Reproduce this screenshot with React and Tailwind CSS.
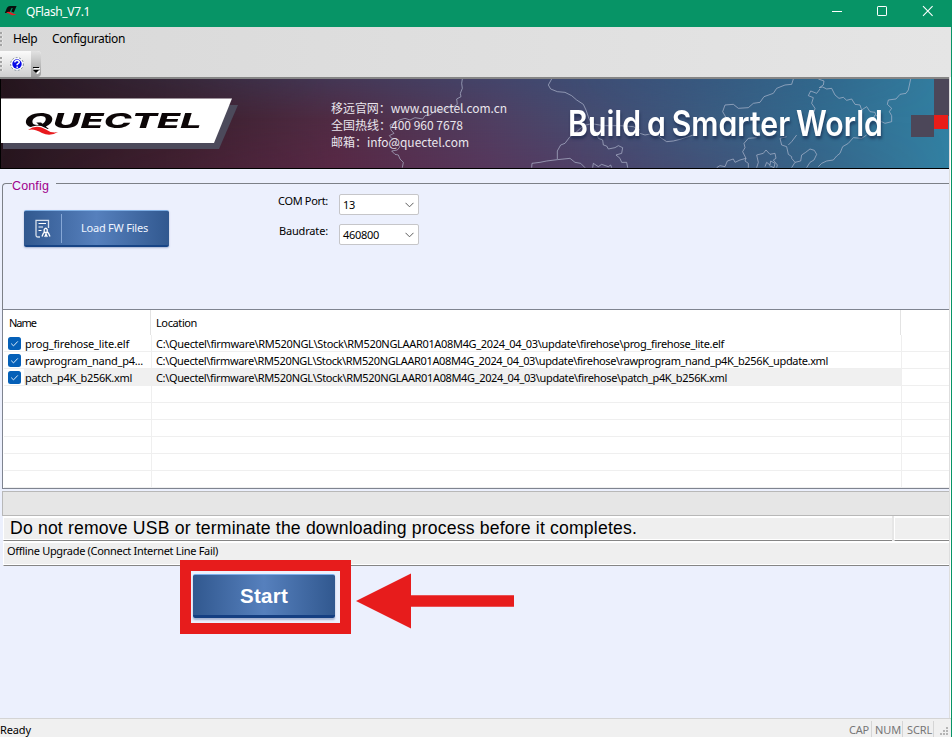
import { useLayoutEffect, useRef } from "react";

const UI = "font-['Noto_Sans',sans-serif]";

/* Single line of text spread over a fixed width, by tracking or by horizontal scaling. */
function Fit({ w, stretch = false, className = "", children }) {
  const ref = useRef(null);
  useLayoutEffect(() => {
    const el = ref.current;
    const apply = () => {
      el.style.letterSpacing = "0px";
      el.style.transform = "none";
      const natural = el.offsetWidth;
      if (stretch) el.style.transform = `scaleX(${w / natural})`;
      else el.style.letterSpacing = `${(w - el.getBoundingClientRect().width) / String(children).length}px`;
    };
    apply();
    document.fonts.ready.then(apply);
  }, [w, stretch, children]);
  return (
    <span ref={ref} className={`inline-block w-max origin-left whitespace-pre ${className}`}>
      {children}
    </span>
  );
}

function TitleBar() {
  return (
    <header className="flex h-[27px] items-start bg-[#079466] pl-[4px] text-white">
      <svg className="mt-[5px]" width="14" height="12" viewBox="0 0 14 12">
        <path d="M.8 8 L3 2.8 Q4 1 6 1 H12.6 L9.8 7.5 L7.3 6.5 L8.8 3 H7.6 L5.2 8 Z" fill="#07100d" />
        <path d="M2 7.6 Q5 6 7.5 7.8 Q9.5 9.4 12.5 9.2 Q9.5 11.4 6.5 9.4 Q4.5 8 2 7.6Z" fill="#ee1c24" />
      </svg>
      <div className={`ml-[8px] mt-[3px] text-[12px] leading-[18px] ${UI}`}>
        <Fit w={64}>QFlash_V7.1</Fit>
      </div>
      <svg className="ml-auto mr-[17px] mt-[5px]" width="104" height="12" viewBox="0 0 104 12" fill="none" stroke="#fff">
        <path d="M1 6.5h10" />
        <rect x="46.5" y="1.5" width="9" height="9" rx="0.6" />
        <path d="M92 1.2l9.6 9.6M101.6 1.2l-9.6 9.6" strokeWidth="1.1" />
      </svg>
    </header>
  );
}

function Grip({ className }) {
  return (
    <svg className={className} width="3" height="14" viewBox="0 0 3 14">
      {[0, 4, 8, 12].map((y) => (
        <g key={y}>
          <rect x="1" y={y + 0.5} width="1.5" height="1.5" fill="#fff" />
          <rect x="0" y={y} width="2" height="2" fill="#a4a4a4" />
        </g>
      ))}
    </svg>
  );
}

function Menus() {
  return (
    <div className={`flex h-[50px] flex-col bg-gradient-to-r from-[#d9d9d9] to-[#e5e5e5] text-[12px] text-black ${UI}`}>
      <div className="flex h-[24px] items-center">
        <Grip />
        <div className="ml-[10px] leading-[18px]">
          <Fit w={24}>Help</Fit>
        </div>
        <div className="ml-[15px] leading-[18px]">
          <Fit w={73}>Configuration</Fit>
        </div>
      </div>
      <div className="flex h-[26px] w-[41px] items-center rounded-r-[4px] bg-gradient-to-b from-[#fbfbfb] to-[#cfcfcf]">
        <Grip />
        <svg className="-mt-px ml-[7px]" width="14" height="14" viewBox="0 0 14 14">
          <circle cx="7" cy="7" r="6.4" fill="#fff" stroke="#7f8b99" strokeWidth="1" strokeDasharray="2 1.5" />
          <circle cx="7" cy="7" r="4.7" fill="#0808e8" />
          <path d="M4.7 5.4Q5 3.4 7.1 3.4T9.3 5.3Q9.3 6.2 7.2 7.4V8.3M7.2 9.4V11" fill="none" stroke="#fff" strokeWidth="1.5" />
        </svg>
        <div className="ml-auto flex h-full w-[10px] items-end justify-center rounded-r-[4px] bg-gradient-to-b from-[#e2e2e2] to-[#9b9b9b] pb-[3px]">
          <svg width="8" height="7" viewBox="0 0 8 7">
            <path d="M2 1.5h6M3 4h5L5.5 7z" fill="#fff" stroke="#fff" />
            <path d="M1 .5h6" stroke="#000" />
            <path d="M1 3h6L4 6z" fill="#000" />
          </svg>
        </div>
      </div>
    </div>
  );
}

/* Country borders, drawn on a grid three times as fine as the page. */
const WEST = [
  "427,12 425,25 427,40 421,55 423,65 410,72 412,88 402,95 385,98 370,108 345,108 330,120 315,122 308,132 285,128 270,135 255,130 238,135 222,145 210,150 213,165 222,175 208,182 215,190 230,192 228,205 240,215 232,225 215,228 225,238 235,240 240,252 250,262 247,278",
  "695,12 685,30 692,42 712,50 735,52 755,62 770,75 790,88 798,105 805,125 815,150 830,175 835,190 848,195 850,210 860,213 865,222 885,218 895,212 908,218 905,235 888,240 900,250 905,262 920,262 923,278",
  "635,278 636,265 660,262 680,258 712,254 750,250 765,262 782,265 795,278",
  "712,252 712,228 722,210 735,205 750,185 765,175 790,152 815,146 850,152 900,152 940,155 960,165",
  "818,278 820,265 835,275 845,268 865,275 872,270 875,278",
];
const EAST = [
  "0,175 15,180 35,176 50,178 65,190 80,200 100,198 120,193 160,180",
  "230,278 240,272 255,275 262,258 280,252 285,262 300,255 318,250 308,230 315,218 312,205 325,190 350,188",
  "318,250 315,258 325,265 325,278",
  "350,278 355,262 350,240 370,235 378,225 390,238 405,235 408,250 400,255 412,270 410,278",
  "375,275 380,262 390,270 392,258 405,265 402,278 388,272",
  "455,278 465,262 455,250 455,245 445,238 440,215 425,210 420,190 440,185",
  "465,262 482,258 485,240 497,232 510,222 523,226 530,238 522,255 510,262 500,278",
  "535,275 545,265 560,258 580,255 590,243 600,235 608,215 625,205 640,188 665,190 680,180",
  "445,210 455,200 470,180",
  "265,140 248,110 255,90 280,88 295,100 325,98 340,85 360,82 372,65 400,55 410,40 435,30 455,28 460,12",
  "535,12 552,18 550,30 538,38 548,36 560,42 575,40 585,60 597,70 610,67 620,76 635,72 645,88 660,90 665,105 680,95 690,110 705,112 708,122 720,125",
  "540,42 530,55 512,48 505,62 520,68 515,85 525,100 522,112",
  "812,12 805,45 798,55 780,58 768,72 745,75 742,88 755,100 748,110 755,122 755,140 735,145 725,140 715,145 700,130 705,120",
];

function MapLines() {
  return (
    <svg className="absolute left-0 top-0" width="949" height="89" viewBox="0 79 949 89" fill="none" stroke="#b6bdd3" strokeOpacity=".66" strokeWidth="3" strokeLinejoin="round">
      <g transform="translate(320 75) scale(.33333)">
        {WEST.map((p) => <polyline key={p} points={p} />)}
      </g>
      <g transform="translate(640 75) scale(.33333)">
        {EAST.map((p) => <polyline key={p} points={p} />)}
      </g>
    </svg>
  );
}

function Banner() {
  return (
    <div className="h-[92px] border-b border-t-2 border-b-black border-t-[#858585]">
      <div className="relative flex h-[89px] overflow-hidden bg-[linear-gradient(97deg,#25151d_0%,#3b202e_20%,#512c45_36%,#4f3f62_52%,#3f5379_68%,#32698d_85%,#3281a3_100%)]">
        <div className="absolute inset-0 bg-[linear-gradient(180deg,rgba(40,85,130,.28)_0%,rgba(0,0,0,0)_45%,rgba(112,28,72,.22)_100%)] [mask-image:linear-gradient(90deg,transparent,black_35%,black_60%,transparent)]" />
        <MapLines />
        <svg className="absolute left-0 top-0" width="949" height="89" viewBox="0 79 949 89">
          <path d="M3 105H238L219 149H3z" fill="#4c4a5b" />
          <path d="M1 98.5H232L214 143H1z" fill="#fff" />
          <path d="M0 79h1v89H0z" fill="#000" />
          <path d="M934 79h15v37h-15zM911 115h23v22h-23z" fill="#4c4759" />
          <path d="M934 115h14v14h-14z" fill="#e91d18" />
        </svg>
        <div className="relative mt-[28px] w-[331px] pl-[24px]">
          <Fit w={178} stretch className="font-['Inter',sans-serif] text-[20.5px] font-extrabold italic leading-[28px] text-[#0c0607]">
            QUECTEL
          </Fit>
          <svg className="absolute left-[25px] top-[17px]" width="36" height="13" viewBox="0 0 36 13">
            <path d="M3 6Q11 0 20 5Q26 9.5 33 8Q25 13 17 9Q9 4 3 6Z" fill="#e8191d" stroke="#fff" strokeWidth="2.4" paintOrder="stroke" />
          </svg>
        </div>
        <div className="relative flex w-[237px] flex-col pt-[20px] font-['Noto_Sans_CJK_SC',sans-serif] text-[12px] leading-[17px] text-[#e9e5ec]">
          <Fit w={176}>移远官网：www.quectel.com.cn</Fit>
          <Fit w={132}>全国热线：400 960 7678</Fit>
          <Fit w={138}>邮箱：info@quectel.com</Fit>
        </div>
        <div className="relative pt-[22px] font-['Inter',sans-serif] text-[35px] font-semibold leading-[44px] text-white [font-feature-settings:'cv11'] [text-shadow:1px_3px_3px_rgba(20,35,70,.6)] [word-spacing:-2px]">
          <Fit w={315} stretch>Build a Smarter World</Fit>
        </div>
      </div>
    </div>
  );
}

const BLUE = "bg-[linear-gradient(90deg,#31588f_0%,#5680bd_50%,#31588f_100%)]";

function Field({ label, w, value, vw }) {
  return (
    <div className="flex h-[30px] items-start">
      <div className="flex w-[66px] justify-end pr-[10px] leading-[14px]">
        <Fit w={w}>{label}</Fit>
      </div>
      <div className="ml-px flex h-[21px] w-[80px] items-center justify-between rounded-[2px] border border-[#c6c6c9] bg-white pl-[3px] pr-[4px]">
        <span className="pt-px">
          <Fit w={vw}>{value}</Fit>
        </span>
        <svg width="9" height="6" viewBox="0 0 9 6" fill="none" stroke="#5c5c5c">
          <path d="M.5 .8L4.5 4.8L8.5 .8" />
        </svg>
      </div>
    </div>
  );
}

function Config() {
  return (
    <fieldset className="ml-[2px] flex h-[134px] min-w-0 rounded-tl-[4px] border-l border-t border-[#7c8087] pl-[21px]">
      <legend className="-ml-[12px] h-[17px] w-[44px] font-['Liberation_Sans',sans-serif] text-[12.5px] leading-[22px] text-[#a0008c]">
        <Fit w={37}>Config</Fit>
      </legend>
      <div className={`flex text-[11px] text-black ${UI}`}>
        <button className={`mt-[18px] flex h-[37px] w-[145px] items-center rounded-[2px] border-b-2 border-t border-b-[#174486] border-t-[#81b1e6] text-[#eef4ff] shadow-[0_1px_2px_#a6b2d0] ${BLUE}`}>
          <span className="flex h-[29px] w-[38px] items-center justify-center border-r border-[#86a7d6]">
            <svg width="16" height="19" viewBox="0 0 16 19" fill="none" stroke="#fff">
              <path d="M5 18H3Q1 18 1 16V1.3H13.5V9" strokeWidth="1.3" strokeOpacity=".8" />
              <path d="M3.5 4.5H11M3.5 8H8M3.5 11.5H6.5" />
              <path d="M9.2 13V10.5Q10.8 8 12.2 10.5V13M8.8 13.5h4.5M7 17.6l1.7-4M15 17.6l-1.8-4M9.8 18l1.2-3 1.2 3" strokeWidth="1.3" />
            </svg>
          </span>
          <span className="ml-[19px] pt-px">
            <Fit w={67}>Load FW Files</Fit>
          </span>
        </button>
        <div className="ml-[103px] mt-[2px] flex flex-col">
          <Field label="COM Port:" w={50} value="13" vw={12} />
          <Field label="Baudrate:" w={49} value="460800" vw={36} />
        </div>
      </div>
    </fieldset>
  );
}

const DIR = "C:\\Quectel\\firmware\\RM520NGL\\Stock\\RM520NGLAAR01A08M4G_2024_04_03\\update\\firehose\\";
const FILES = [
  { name: "prog_firehose_lite.elf", nw: 104, path: DIR + "prog_firehose_lite.elf", pw: 568 },
  { name: "rawprogram_nand_p4...", nw: 118, path: DIR + "rawprogram_nand_p4K_b256K_update.xml", pw: 672 },
  { name: "patch_p4K_b256K.xml", nw: 107, path: DIR + "patch_p4K_b256K.xml", pw: 571, selected: true },
];

function FileTable() {
  return (
    <div className={`ml-[2px] h-[180px] overflow-hidden border-y border-l border-[#7f8490] bg-white text-[11px] text-black ${UI}`}>
      <div className="flex h-[25px] items-center">
        <div className="flex h-full w-[148px] items-center border-r border-[#e3e3e3] pl-[6px] pt-px">
          <Fit w={27}>Name</Fit>
        </div>
        <div className="flex h-full w-[750px] items-center border-r border-[#e3e3e3] pl-[5px] pt-px">
          <Fit w={41}>Location</Fit>
        </div>
      </div>
      {Array.from({ length: 9 }, (_, i) => {
        const f = FILES[i];
        return (
          <div key={i} className="ml-px flex h-[17px] border-b border-[#efefef] leading-[17px]">
            <div className="flex w-[148px] shrink-0 items-center border-r border-[#efefef] pl-[4px]">
              {f && (
                <>
                  <svg width="13" height="13" viewBox="0 0 13 13">
                    <rect width="13" height="13" rx="2.5" fill="#0560b8" />
                    <path d="M3.2 6.6L5.5 8.9L9.8 4.4" fill="none" stroke="#dcecfa" />
                  </svg>
                  <span className={f.selected ? "ml-[3px] flex h-[17px] flex-1 items-center bg-[#f0f0f0] pl-px" : "ml-[4px] flex items-center"}>
                    <Fit w={f.nw}>{f.name}</Fit>
                  </span>
                </>
              )}
            </div>
            <div className={`w-[750px] shrink-0 border-r border-[#efefef] pl-[4px] ${f && f.selected ? "bg-[#f0f0f0]" : ""}`}>
              {f && <Fit w={f.pw}>{f.path}</Fit>}
            </div>
          </div>
        );
      })}
    </div>
  );
}

const PANE = "border-b border-l border-b-[#858585] border-l-white bg-[#efefef] shadow-[inset_0_2px_0_#fff,inset_0_-1px_0_#fff]";

function Messages() {
  return (
    <div className="ml-[2px] pt-[2px] text-black">
      <div className="h-[25px] border-y border-l border-[#b8b8b8] bg-[#e6e6e6]" />
      <div className="ml-px flex h-[25px] gap-[2px] bg-[#e6e6e6]">
        <div className={`w-[889px] pl-[6px] font-['Liberation_Sans',sans-serif] text-[17.6px] leading-[25px] ${PANE}`}>
          <Fit w={627}>Do not remove USB or terminate the downloading process before it completes.</Fit>
        </div>
        <div className={`flex-1 ${PANE}`} />
      </div>
      <div className={`ml-px h-[25px] pl-[3px] text-[11px] leading-[20px] ${UI} ${PANE}`}>
        <Fit w={211}>Offline Upgrade (Connect Internet Line Fail)</Fit>
      </div>
    </div>
  );
}

function StartArea() {
  return (
    <div className="relative flex-1">
      <button className={`ml-[193px] mt-[8px] flex h-[44px] w-[142px] items-center justify-center rounded-[2px] border-b-[3px] border-t border-b-[#153f82] border-t-[#7cb0ec] pt-[2px] font-['Liberation_Sans',sans-serif] text-[20.5px] font-bold text-white shadow-[0_2px_2px_#a6b2d0] ${BLUE}`}>
        <Fit w={48}>Start</Fit>
      </button>
      <div className="absolute -top-[6px] left-[180px] h-[74px] w-[171px] border-[11px] border-[#e71c1c]" />
      <svg className="absolute left-[356px] top-[7px]" width="158" height="56" viewBox="0 0 158 56" fill="#e71c1c">
        <path d="M0 28L55 0.5V22.3H158V33.7H55V55.5z" />
      </svg>
    </div>
  );
}

function StatusBar() {
  return (
    <footer className={`flex h-[19px] border-t border-[#d4d4d4] bg-[#f0f0f0] text-[11px] leading-[22px] text-black ${UI}`}>
      <Fit w={31}>Ready</Fit>
      <div className="ml-auto flex text-[#767676]">
        <div className="mt-[2px] flex w-[23px] border-r border-[#d5d5d5] leading-[18px]"><Fit w={20}>CAP</Fit></div>
        <div className="mt-[2px] flex w-[31px] border-r border-[#d5d5d5] pl-[3px] leading-[18px]"><Fit w={26}>NUM</Fit></div>
        <div className="mt-[2px] flex w-[31px] border-r border-[#d5d5d5] pl-[4px] leading-[18px]"><Fit w={25}>SCRL</Fit></div>
      </div>
      <svg className="ml-[6px] mr-[2px] mt-[8px]" width="9" height="9" viewBox="0 0 9 9" fill="#b5b5b5">
        <path d="M6 0h2v2h-2zM3 3h2v2H3zM6 3h2v2H6zM0 6h2v2H0zM3 6h2v2H3zM6 6h2v2H6z" />
      </svg>
    </footer>
  );
}

export default function App() {
  return (
    <div className="flex h-[737px] w-[952px] flex-col overflow-hidden bg-[#ecf0fd]">
      <TitleBar />
      <div className="flex flex-1 flex-col border-r border-[#079466]">
        <Menus />
        <div className="flex flex-1 flex-col border-r border-white">
          <div className="flex flex-1 flex-col border-r border-[#dedede]">
            <Banner />
            <div className="h-[6px]" />
            <Config />
            <FileTable />
            <Messages />
            <StartArea />
          </div>
        </div>
        <StatusBar />
      </div>
    </div>
  );
}
